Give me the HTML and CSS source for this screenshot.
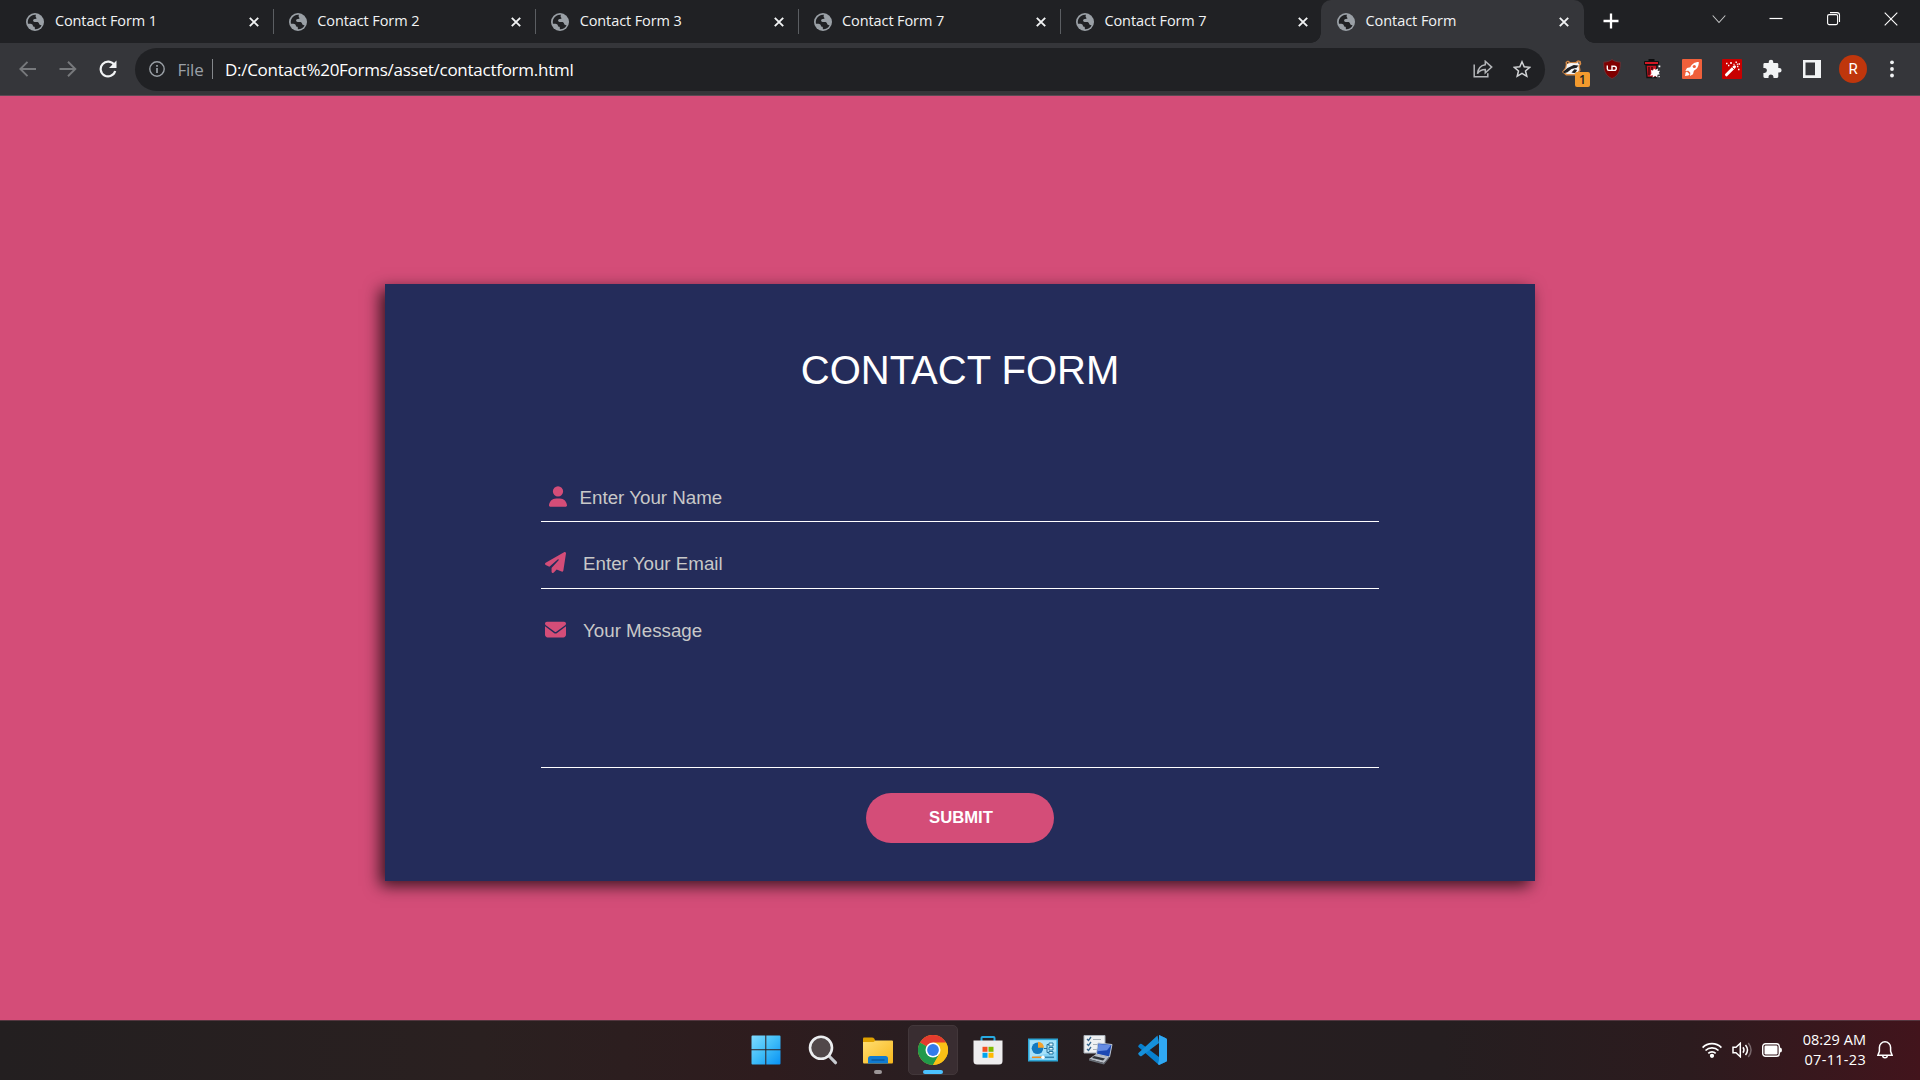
FILE: index.html
```html
<!DOCTYPE html>
<html lang="en">
<head>
<meta charset="utf-8">
<title>Contact Form</title>
<link rel="stylesheet" href="styles.css">
</head>
<body>
<svg class="defs" width="0" height="0">
  <symbol id="globe" viewBox="0 0 18 18"><circle cx="9" cy="9" r="9" fill="#9aa0a6"/><path fill="#202124" d="M10 1.800C6.500 1.500 3.500 3.500 2.300 6.300 1.700 7.800 1.700 9.500 2 10.800c1.600.2 3.300-.2 4.300.7.900.800.300 1.700 1.100 2.100.8.300 1.300.1 1.400 1l.1 1.600c3 .1 5.600-1.500 6.700-4-1.300.2-2.300-.3-2.500-1.400-.2-1.400-1.200-1.900-2.600-1.800-1.500.1-2.800.2-3.300-.9-.4-1 .3-1.900 1.400-2.100 1-.2 1.700.2 1.900-.7.200-.8-.9-1-.9-1.900 0-.6.200-1.100.4-1.600z"/></symbol>
  <symbol id="close" viewBox="0 0 10 10"><path d="M.8.8l8.400 8.400M9.200.8L.8 9.200" stroke="#f1f3f4" stroke-width="1.900"/></symbol>
</svg>

<header class="tabs">
  <div class="tab"><svg class="globe"><use href="#globe"/></svg><span>Contact Form 1</span><svg class="close"><use href="#close"/></svg></div>
  <div class="tab"><svg class="globe"><use href="#globe"/></svg><span>Contact Form 2</span><svg class="close"><use href="#close"/></svg></div>
  <div class="tab"><svg class="globe"><use href="#globe"/></svg><span>Contact Form 3</span><svg class="close"><use href="#close"/></svg></div>
  <div class="tab"><svg class="globe"><use href="#globe"/></svg><span>Contact Form 7</span><svg class="close"><use href="#close"/></svg></div>
  <div class="tab last"><svg class="globe"><use href="#globe"/></svg><span>Contact Form 7</span><svg class="close"><use href="#close"/></svg></div>
  <div class="tab active"><svg class="globe"><use href="#globe"/></svg><span class="short">Contact Form</span><svg class="close"><use href="#close"/></svg></div>
  <svg class="plus" viewBox="0 0 16 16"><path d="M8 .5v15M.5 8h15" stroke="#fff" stroke-width="2.300"/></svg>
  <div class="window-buttons">
    <svg viewBox="0 0 14 14"><path d="M.7 3.500L7 10.500l6.300-7" fill="none" stroke="#c4c5c6" stroke-width="1.100"/></svg>
    <svg viewBox="0 0 14 14"><path d="M.5 6.500h13" stroke="#fff" stroke-width="1.200"/></svg>
    <svg viewBox="0 0 14 14" fill="none" stroke="#fff" stroke-width="1.100"><rect x=".6" y="2.600" width="10" height="10" rx="1.500"/><path d="M3 .6h7A2.500 2.500 0 0 1 12.500 3.100v7"/></svg>
    <svg viewBox="0 0 14 14"><path d="M.7.7l12.600 12.600M13.300.7L.7 13.300" stroke="#fff" stroke-width="1.100"/></svg>
  </div>
</header>

<nav class="toolbar">
  <div class="navigation">
    <svg viewBox="0 0 18 18" fill="none" stroke="#77797c" stroke-width="1.900"><path d="M17 9H2M8.500 1.800L1.300 9l7.200 7.200"/></svg>
    <svg viewBox="0 0 18 18" fill="none" stroke="#77797c" stroke-width="1.900"><path d="M.5 9H16M9 1.800L16.300 9 9 16.200"/></svg>
    <svg viewBox="0 0 18 18"><path d="M15.300 5A7.400 7.400 0 1 0 16.200 11" fill="none" stroke="#f1f3f4" stroke-width="2.200"/><path d="M17.500.6v7.500H10z" fill="#f1f3f4"/></svg>
  </div>
  <div class="address">
    <svg class="info" viewBox="0 0 16 16"><circle cx="8" cy="8" r="7.200" fill="none" stroke="#9aa0a6" stroke-width="1.400"/><path d="M8 7v5M8 4v1.700" stroke="#9aa0a6" stroke-width="1.700"/></svg>
    <span class="scheme">File</span><i class="divider"></i><span class="url">D:/Contact%20Forms/asset/contactform.html</span>
    <svg class="share" viewBox="0 0 20 18" fill="none" stroke="#b4b6b9" stroke-width="1.500"><path d="M1.200 4.500v12.300h13.600v-3.500"/><path d="M12.300 1.300l6.400 5.800-6.400 5.700V9.600C8.800 9.600 6.300 11 4.500 13.700 5 8.500 7.500 5.300 12.300 4.700z"/></svg>
    <svg class="star" viewBox="0 0 18 18"><path d="M9 1.800l2.200 5 5.500.5-4.200 3.600 1.300 5.400L9 13.400l-4.800 2.900 1.300-5.400L1.300 7.300l5.500-.5z" fill="none" stroke="#d2d4d6" stroke-width="1.500"/></svg>
  </div>
  <div class="extensions">
    <div class="badger"><svg viewBox="0 0 20 16"><path d="M0 12l3-4 .8-3.200L3.500 2 6 .5l2.500 1.700 5-.2L16 .2l2.700.8.600 3-1.500 2 .8 4.500-4 5H4z" fill="#d98b45"/><path d="M1.500 11.500L4.300 8l.8-4.300L9 3l5.300.2L16.500 2l1.200.8-1.200 3 .6 4.200-3 4H5z" fill="#f4f4f4"/><path d="M1 11.800L5.500 8l6.300-3 4.500.5-1.500 2.300L9.500 9l-4 3.200-3.500 1zM9.500 12.500l3-3.200 2.600.7-2 3.200zM5 2l1.800.6L5.500 4zM16.500 1.500l1.500 2-1.700.3z" fill="#202124"/></svg><b>1</b></div>
    <svg class="shield" viewBox="0 0 18 20"><path d="M9 .5c2.500 1.800 5 2.500 8.300 2.600C17.500 11 16 16.500 9 19.600 2 16.500.5 11 .7 3.100 4 3 6.500 2.300 9 .5z" fill="#800000" stroke="#653337"/><path d="M4.300 6.500v3.200q0 1.700 1.700 1.700h3V6.500M9 7.200h2.200a2.100 2.100 0 0 1 0 4.200H9" fill="none" stroke="#fff" stroke-width="1.400"/></svg>
    <svg class="bin" viewBox="0 0 18 20"><path d="M5.500 1.200h6M1 4h15" stroke="#0c0c0d" stroke-width="2.400"/><path d="M1.500 2.500h14v3h-14z" fill="#d31824" stroke="#111"/><path d="M3 6h11l-.7 12.500H4z" fill="#c31521" stroke="#111" stroke-width="1.300"/><path d="M6 8v8M9 8v4" stroke="#4a080c" stroke-width="1.500"/><path d="M8 11l2 .4 1-2 1.500 1.300L15 9.500l-.3 2.500 2.300-.2-1.300 2.200 1.300 1.200-2.500.6-.3 2.700-2.100-1.800-2.400 2 .2-2.500-3 .5 1.500-2zM15.500 6.500h1.800v1.800h-1.800zM15.500 17h1.300v1.300h-1.300z" fill="#fff"/></svg>
    <svg class="square" viewBox="0 0 20 20"><rect width="20" height="20" rx="1" fill="#f0603b"/><path d="M16.800 3c-4.500 0-6.800 2.200-8.500 5.200L5 9l-1.700 3 3-.2 2 2-.3 3.200 3-1.700.9-3.500c3-1.800 5-4.200 4.900-8.800z" fill="#fff"/><path d="M3 17l.6-3.400 1.300-1 2.700 2.600-1.200 1.300z" fill="#fff"/><circle cx="12.300" cy="7.500" r="1.600" fill="#f0603b"/></svg>
    <svg class="square" viewBox="0 0 20 20"><rect width="20" height="20" rx="1" fill="#c80000"/><path d="M4.500 15.800l8-8" stroke="#fff" stroke-width="3" stroke-linecap="round"/><path d="M10.300 8.300l1.600 1.600" stroke="#c80000"/><path d="M4 4.500h1.500M8 4h2M13.500 3.300h1.400M16.500 5H18M15 7.500h1.400M16 10.500h1.500M11.500 5.500h1M6 6.500h1.400M14.800 5.200h1" stroke="#fff" stroke-width="1.400"/></svg>
    <svg class="puzzle" viewBox="0 0 20 20"><path d="M3 4h3.700V3a2.300 2.300 0 0 1 4.600 0v1H15a1.300 1.300 0 0 1 1.300 1.300V9h1a2.300 2.300 0 0 1 0 4.600h-1v4A1.400 1.400 0 0 1 15 19h-3.500v-1a2.500 2.500 0 0 0-5 0v1H2.800a1.400 1.400 0 0 1-1.400-1.400V14h1a2.500 2.500 0 0 0 0-5h-1V5.300A1.400 1.400 0 0 1 3 4z" fill="#f1f3f4"/></svg>
    <svg class="panel" viewBox="0 0 18 18"><path d="M0 0h18v18H0zM2.500 2.500v12.800H12V2.500z" fill="#f1f3f4" fill-rule="evenodd"/></svg>
    <span class="avatar">R</span>
    <svg class="dots" viewBox="0 0 4 18" fill="#f1f3f4"><circle cx="2" cy="2.300" r="1.900"/><circle cx="2" cy="9" r="1.900"/><circle cx="2" cy="15.500" r="1.900"/></svg>
  </div>
</nav>

<main class="page">
  <form class="card">
    <h1>CONTACT FORM</h1>
    <label class="field name"><svg viewBox="0 0 448 512"><path d="M224 256A128 128 0 1 0 224 0a128 128 0 1 0 0 256zm-45.700 48C79.800 304 0 383.800 0 482.300C0 498.700 13.300 512 29.700 512H418.300c16.400 0 29.700-13.300 29.700-29.700C448 383.800 368.200 304 269.700 304H178.300z"/></svg><span>Enter Your Name</span></label>
    <label class="field email"><svg viewBox="0 0 512 512"><path d="M498.100 5.600c10.100 7 15.400 19.100 13.500 31.200l-64 416c-1.500 9.700-7.400 18.200-16 23s-18.900 5.400-28 1.600L284 427.700l-68.500 74.100c-8.900 9.700-22.900 12.900-35.200 8.100S160 493.200 160 480V396.400c0-4 1.500-7.800 4.200-10.700L331.800 202.800c5.800-6.300 5.600-16-.4-22s-15.700-6.400-22-.7L106 360.800 17.700 316.600C7.100 311.300 .3 300.700 0 288.900s5.900-22.800 16.100-28.700l448-256c10.700-6.100 23.900-5.500 34 1.400z"/></svg><span>Enter Your Email</span></label>
    <label class="field message"><svg viewBox="0 0 512 512"><path d="M48 64C21.500 64 0 85.500 0 112c0 15.100 7.100 29.300 19.200 38.400L236.800 313.600c11.400 8.500 27 8.500 38.400 0L492.800 150.400c12.100-9.100 19.200-23.300 19.200-38.400c0-26.500-21.500-48-48-48H48zM0 176V384c0 35.300 28.700 64 64 64H448c35.300 0 64-28.700 64-64V176L294.400 339.200c-22.800 17.100-54 17.100-76.800 0L0 176z"/></svg><span>Your Message</span></label>
    <button type="button">SUBMIT</button>
  </form>
</main>

<footer class="taskbar">
  <div class="apps">
    <div class="app windows"><svg viewBox="0 0 30 30"><defs><linearGradient id="win" gradientUnits="userSpaceOnUse" x1="0" y1="0" x2="30" y2="30"><stop stop-color="#82dcff"/><stop offset=".5" stop-color="#3fbdf8"/><stop offset="1" stop-color="#0690f4"/></linearGradient></defs><path fill="url(#win)" d="M1.500.5h12.800v13.800H.5V1.500a1 1 0 0 1 1-1zM15.300.5h13.200a1 1 0 0 1 1 1v12.800H15.300zM.5 15.300h13.800v14.200H1.500a1 1 0 0 1-1-1zM15.300 15.300h14.200v13.200a1 1 0 0 1-1 1H15.300z"/></svg></div>
    <div class="app"><svg viewBox="0 0 30 30"><path d="M20.500 20.500l7 7.200" stroke="#c7cbd0" stroke-width="3.200" stroke-linecap="round"/><circle cx="13" cy="12.800" r="11" fill="#51484a" stroke="#eceef0" stroke-width="2.600"/></svg></div>
    <div class="app"><svg viewBox="0 0 30 30"><defs><linearGradient id="folder" x2="1" y2="1"><stop stop-color="#ffde72"/><stop offset="1" stop-color="#f7b71b"/></linearGradient></defs><path d="M0 3.500Q0 2.500 1 2.500h8q1.500 0 2.300 1.300L12.500 6 11 9H0z" fill="#dfa100"/><path d="M0 7h10.500l2-1.500H29q1 0 1 1V27q0 1.500-1 1.500H1q-1 0-1-1.500z" fill="url(#folder)"/><path d="M5 28.500v-5q0-2.500 2.500-2.500h15q2.500 0 2.500 2.500v5z" fill="#107bd1"/><path d="M8.500 25h13" stroke="#064b87"/></svg><i class="running"></i></div>
    <div class="app current"><svg viewBox="0 0 30 30"><circle cx="15" cy="15" r="15" fill="#fbc116"/><path d="M15 15L2 7.500A15 15 0 0 1 28 7.500z" fill="#e33b2e"/><path d="M2 7.500A15 15 0 0 0 15 30l6.500-11.300L15 15z" fill="#219a4a"/><path d="M15 7.500h13A15 15 0 0 1 15 30l6.500-11.200z" fill="#fbc116"/><circle cx="15" cy="15" r="7.500" fill="#fff"/><circle cx="15" cy="15" r="5.900" fill="#347bea"/></svg><i class="running"></i></div>
    <div class="app"><svg viewBox="0 0 30 30"><path d="M8.500 6V3q0-1 1-1h11q1 0 1 1v3" fill="none" stroke="#27aae1" stroke-width="2"/><path d="M.5 5.500h29V26q0 3.500-3.500 3.500H4Q.5 29.500.5 26z" fill="#eeedee"/><path d="M9.500 11.800h5v5h-5z" fill="#f25022"/><path d="M15.500 11.800h5v5h-5z" fill="#7fba00"/><path d="M9.500 17.800h5v5h-5z" fill="#00a4ef"/><path d="M15.500 17.800h5v5h-5z" fill="#ffb900"/></svg></div>
    <div class="app"><svg viewBox="0 0 30 30"><path d="M.7 4.200h28.600v21.600H.7z" fill="#84d2f5" stroke="#2da5d5" stroke-width="1.400"/><path d="M2 5.500h26v11L2 22.500z" fill="#a8e2fa"/><circle cx="9.500" cy="13.300" r="5.800" fill="#1379c0"/><path d="M10 12.800v-6a6 6 0 0 1 6 6z" fill="#f5a12c"/><path d="M16 13.500h3v-4h2m-2 4v4h2" fill="none" stroke="#246d99"/><path d="M21 8h4v3h-4zM21 12.500h4V15h-4zM21 16.500h4V19h-4z" fill="#e8f9ff" stroke="#24749f"/><path d="M4 22.300h10" stroke="#f28b19" stroke-width="1.500"/><path d="M16 22.300h10" stroke="#3383ae" stroke-width="1.500"/><circle cx="15" cy="22.300" r="1.700" fill="#fff"/></svg></div>
    <div class="app"><svg viewBox="0 0 30 30"><path d="M1 .5h21v17.500H1z" fill="#eef0f2" stroke="#a8b0b8"/><path d="M4 4l1.500 1.500L8 2M4 9l1.500 1.500L8 7M4 14l1.500 1.500L8 12" fill="none" stroke="#35658c" stroke-width="1.300"/><path d="M10 4.500h8M10 9.500h5M10 14.500h4" stroke="#a7b0b8"/><path d="M15 8l14 1.500-2.500 12.500-13-3z" fill="#1d49b3" stroke="#bdc8d6"/><path d="M15.500 9l12.500 1.200-4 5-9.500 1z" fill="#668ce2"/><path d="M13 19l13 3-5 6-15-4z" fill="#b8bec6"/><path d="M11 21l11 2.500-2 2-11-2.600z" fill="#30353b"/><path d="M6 24l15 4 5-6v1.500L21 29.500 6 25.500z" fill="#697078"/></svg></div>
    <div class="app code"><svg viewBox="0 0 30 30"><path d="M22 0l7 3.200q1 .5 1 1.500v20.600q0 1-1 1.500L22 30 1.700 12.300q-1-.8-.2-1.800L3 9q.8-.7 1.700 0L22 22V8z" fill="#0780cf"/><path d="M22 8L4.700 21q-.9.700-1.700 0l-1.500-1.500q-.8-1 .2-1.800L20.500.5z" fill="#1690da"/><path d="M22 0l7 3.200q1 .5 1 1.500v20.600q0 1-1 1.500L22 30l-1-1 1-4z" fill="#30a8f2"/></svg></div>
  </div>
  <div class="tray">
    <svg class="wifi" viewBox="0 0 20 16" fill="none" stroke="#fff" stroke-width="1.700"><path d="M.6 5.600a13.200 13.200 0 0 1 18.800 0M3.500 8.500a9.200 9.200 0 0 1 13 0M6.300 11.300a5.300 5.300 0 0 1 7.400 0"/><circle cx="10" cy="13.800" r="1.300" fill="#fff"/></svg>
    <svg class="sound" viewBox="0 0 20 16" fill="none" stroke="#fff" stroke-width="1.500"><path d="M1 5.200h3L8.300 1.300v13.400L4 10.800H1z"/><path d="M11 5.300q2 2.700 0 5.400M13.500 3q4 5 0 10"/><path d="M16.300 1q5.500 7 0 14" stroke="#77666a"/></svg>
    <svg class="battery" viewBox="0 0 20 14"><rect x=".7" y=".7" width="16.600" height="12.600" rx="2.800" fill="none" stroke="#fff" stroke-width="1.400"/><rect x="2.500" y="2.500" width="13" height="9" rx="1.200" fill="#fff"/><path d="M18 4.500q2 0 2 2.500t-2 2.500z" fill="#fff"/></svg>
    <div class="clock"><span class="time">08:29 AM</span><span class="date">07-11-23</span></div>
    <svg class="bell" viewBox="0 0 16 18" fill="none" stroke="#fff" stroke-width="1.500"><path d="M8 .8a5.600 5.600 0 0 0-5.600 5.600v4L.9 14.200h14.200l-1.500-3.800v-4A5.600 5.600 0 0 0 8 .8zM5.700 14.500a2.300 2.300 0 0 0 4.600 0"/></svg>
  </div>
</footer>
</body>
</html>
```
FILE: styles.css
```css
* { box-sizing: border-box; }
body { margin: 0; width: 1920px; height: 1080px; overflow: hidden; display: flex; flex-direction: column; font-family: "Open Sans", sans-serif; }
svg { display: block; flex: none; }
.defs { position: absolute; }

/* browser tabs */
.tabs { height: 43px; display: flex; background: #202124; padding-left: 11.500px; }
.tab { width: 262.400px; height: 43px; padding: 0 15px 2px 14.900px; display: flex; align-items: center; color: #f1f3f4; position: relative; }
.tab::after { content: ""; position: absolute; right: 0; top: 9px; width: 1px; height: 25px; background: #5b5e62; }
.tab.last::after { display: none; }
.tab span { margin-left: 10.500px; font-size: 14.500px; white-space: nowrap; letter-spacing: -.1px; }
.tab .close { margin-left: auto; width: 10px; height: 10px; margin-top: 2px; }
.globe { width: 18px; height: 18px; margin-top: 2px; }
.tab.active { width: 263px; margin-left: -2.500px; padding-left: 16px; background: #35363a; border-radius: 10px 10px 0 0; }
.tab.active .short { letter-spacing: -.05px; }
.tab.active::before, .tab.active::after { content: ""; display: block; position: absolute; top: auto; bottom: 0; width: 10px; height: 10px; }
.tab.active::before { left: -10px; background: radial-gradient(circle at 0 0, transparent 9.500px, #35363a 10px); }
.tab.active::after { right: -10px; background: radial-gradient(circle at 100% 0, transparent 9.500px, #35363a 10px); }
.plus { width: 16px; height: 16px; margin: 13px 0 0 19px; }
.window-buttons { display: flex; gap: 43.300px; margin: 12px 22px 0 auto; }
.window-buttons svg { width: 14px; height: 14px; }

/* address row */
.toolbar { height: 53px; display: flex; align-items: center; background: #35363a; border-bottom: 1px solid #5b4a54; }
.navigation { width: 135px; padding-left: 18.500px; display: flex; gap: 22px; }
.navigation svg { width: 18px; height: 18px; }
.address { width: 1410px; height: 43px; border-radius: 22px; background: #202124; display: flex; align-items: center; padding: 0 13px 0 14.400px; font-size: 17px; }
.info { width: 16px; height: 16px; }
.scheme { color: #9aa0a6; margin-left: 12px; width: 35px; letter-spacing: -.2px; }
.divider { width: 1px; height: 20px; background: #85888c; margin-right: 11.500px; }
.url { color: #fff; letter-spacing: -.26px; }
.share { width: 20px; height: 18px; margin-left: auto; }
.star { width: 18px; height: 18px; margin-left: 20px; margin-right: 1px; }
.extensions { flex: 1; padding-left: 7px; display: grid; grid-template-columns: repeat(9, 40px); align-items: center; justify-items: center; }
.badger { width: 28px; height: 31px; margin-left: 8px; position: relative; padding-top: 6px; }
.badger svg { width: 20px; height: 16px; }
.badger b { position: absolute; right: 0; bottom: -2px; width: 15px; height: 15px; border-radius: 2px; background: #f29a2e; color: #202124; text-align: center; font: 600 12px/15px "Open Sans", sans-serif; }
.shield, .bin { width: 18px; height: 20px; }
.square { width: 20px; height: 20px; }
.puzzle { width: 20px; height: 20px; }
.panel { width: 18px; height: 18px; }
.avatar { width: 28px; height: 28px; margin-left: 2px; border-radius: 50%; background: #bf360c; color: #fff; text-align: center; font: 15px/28px Roboto, sans-serif; }
.dots { width: 4px; height: 18px; }

/* form */
.page { flex: 1; background: #d44d78; padding-top: 188px; font-family: "Liberation Sans", sans-serif; }
.card { width: 1150px; height: 597px; margin: 0 auto; background: #242c5a; box-shadow: -5px 5px 15px rgba(0,0,0,.72); padding: 63px 156px 0; }
h1 { margin: 0; height: 115px; color: #fff; text-align: center; font-size: 40px; font-weight: 400; line-height: 46px; }
.field { display: flex; width: 838px; border-bottom: 1px solid #fff; font-size: 18.750px; line-height: 22px; color: #c8c8c8; }
.field svg { fill: #d44d78; }
.name { height: 60px; padding: 24px 0 0 8px; }
.name svg { width: 18px; height: 21px; }
.name span { margin-left: 12.500px; margin-top: 1px; }
.email { height: 67px; padding: 30px 0 0 4px; }
.email svg, .message svg { width: 21px; height: 21px; }
.email span, .message span { margin-left: 17px; margin-top: 1px; }
.message { height: 179px; padding: 30px 0 0 4px; }
button { display: block; width: 188px; height: 50px; margin: 25px auto 0; padding: 0 0 1px 2px; border: 0; border-radius: 25px; background: #d44d78; color: #fff; font: 700 16.670px/49px "Liberation Sans", sans-serif; }

/* taskbar */
.taskbar { height: 60px; border-top: 1px solid #54363f; background: linear-gradient(90deg, #231f20 0, #2a2020 25%, #2e1c1e 40%, #281e21 50%, #251e20 75%, #2c1b1e 88%, #42141c 100%); display: grid; grid-template-columns: 1fr auto 1fr; }
.apps { grid-column: 2; display: flex; gap: 5px; padding-top: 4px; }
.app { width: 50px; height: 50px; border-radius: 5px; display: flex; justify-content: center; padding-top: 10px; position: relative; }
.app svg { width: 30px; height: 30px; }
.windows { padding-right: 3px; }
.code { padding-right: 1px; }
.current { background: #392d31; border: 1px solid #42373a; padding-top: 9px; }
.running { position: absolute; bottom: 1px; left: 21px; width: 8px; height: 4px; border-radius: 2px; background: #9c9698; }
.current .running { left: 14px; bottom: 0; width: 20px; background: #4cc2ff; }
.tray { justify-self: end; display: flex; align-items: center; padding: 0 27px 2px 0; color: #fff; }
.wifi, .sound { width: 20px; height: 16px; margin-right: 10px; }
.battery { width: 20px; height: 14px; }
.clock { margin-left: 20px; width: 64px; display: flex; flex-direction: column; text-align: right; font-size: 14.500px; line-height: 20px; white-space: nowrap; }
.time { letter-spacing: .05px; }
.date { letter-spacing: .3px; }
.bell { width: 16px; height: 18px; margin-left: 11px; }
```
